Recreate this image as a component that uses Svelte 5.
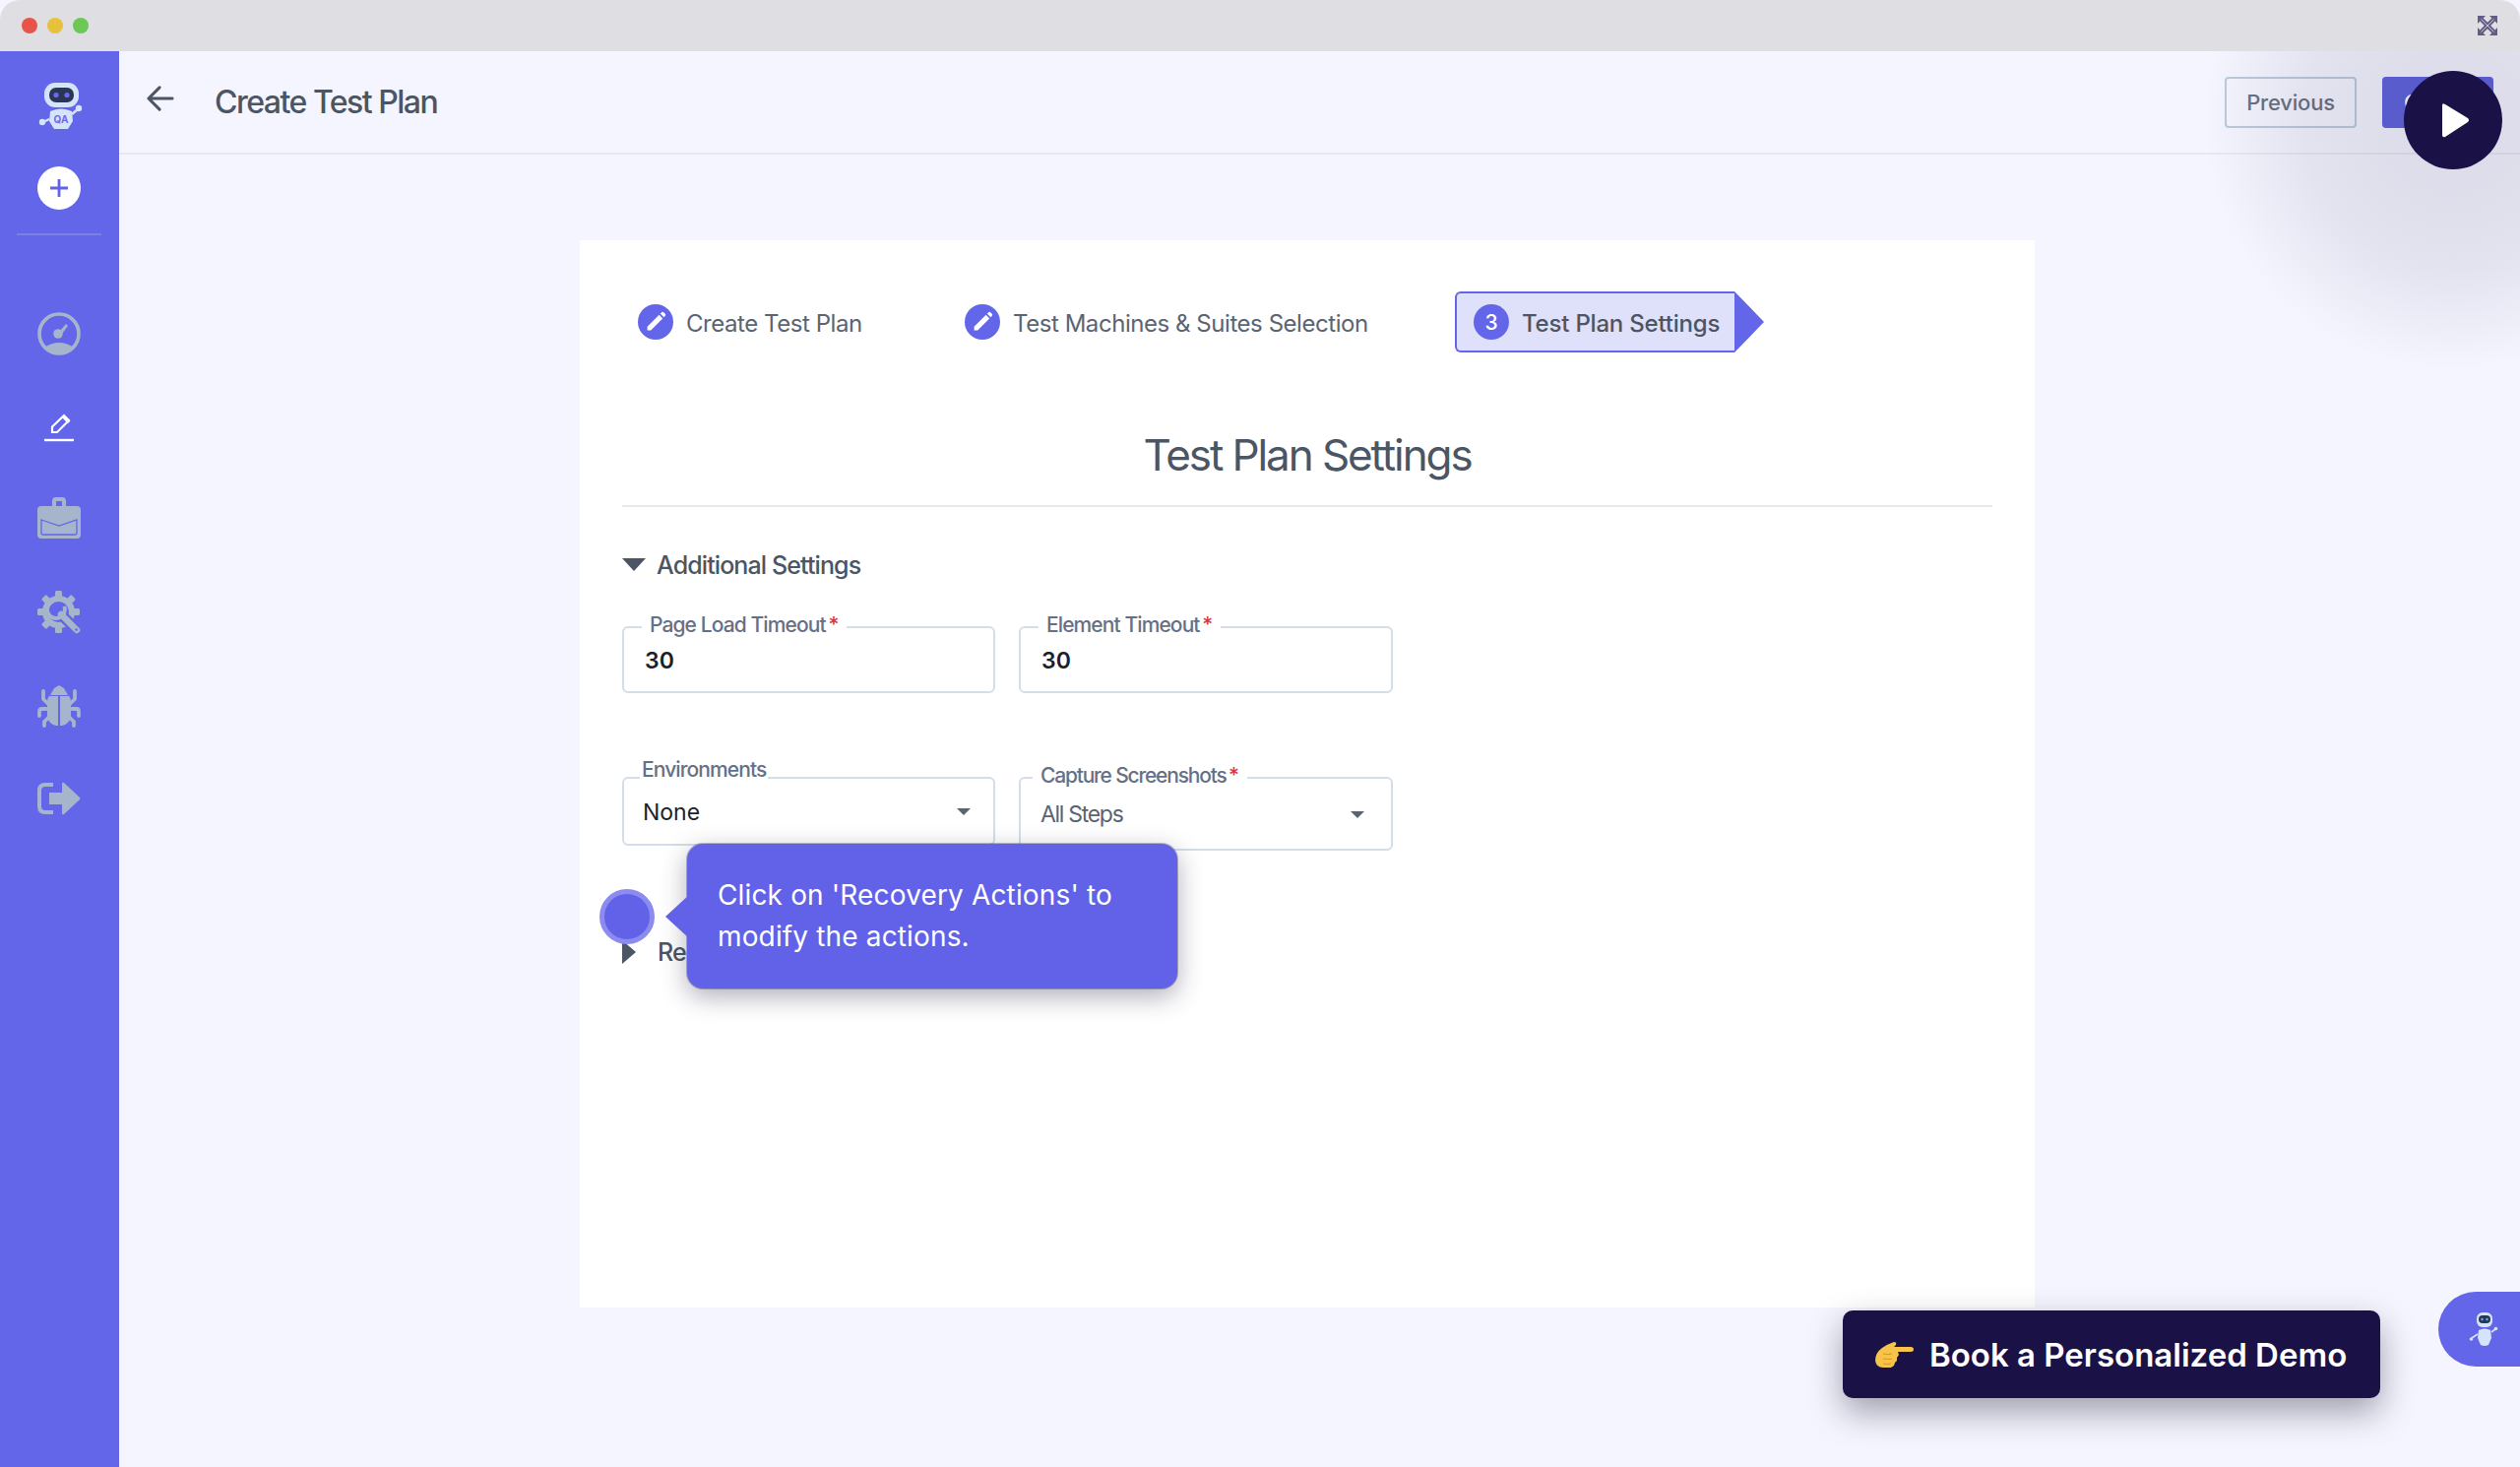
<script>
  const steps = [
    { label: 'Create Test Plan', cls: 's1' },
    { label: 'Test Machines & Suites Selection', cls: 's2' }
  ];
  const teeth = [0, 45, 90, 135, 180, 225, 270, 315];
</script>

<div class="window">
  <div class="titlebar">
    <div class="dots"><i class="red"></i><i class="yellow"></i><i class="green"></i></div>
    <svg class="expand" viewBox="0 0 20 20" width="20" height="20" fill="#635d85">
      <path d="M0 0h8L5.600 2.400 10 6.800l4.400-4.400L12 0h8v8l-2.400-2.400L13.200 10l4.400 4.400L20 12v8h-8l2.400-2.400L10 13.200l-4.400 4.400L8 20H0v-8l2.400 2.400L6.800 10 2.400 5.600 0 8z"/>
      <path d="M3.500 3.500l13 13M16.500 3.500l-13 13" stroke="#dfdee2" stroke-width=".8"/>
    </svg>
  </div>
  <div class="body">
    <aside class="sidebar">
      <div class="logo">
        <svg viewBox="0 0 46 48" width="46" height="48">
          <rect x="6" y="0" width="35" height="25" rx="11" fill="#d5e3fb"/>
          <rect x="11" y="5" width="25" height="15" rx="7" fill="#2b3656"/>
          <circle cx="18" cy="12.500" r="2.600" fill="#6b6bea"/>
          <circle cx="29" cy="12.500" r="2.600" fill="#6b6bea"/>
          <path d="M12 29q11-5 22 0l1 10-5 8H16l-5-8z" fill="#d5e3fb"/>
          <path d="M11 37l-6 3M34 32l6-5" stroke="#d5e3fb" stroke-width="2.500"/>
          <circle cx="4" cy="40" r="3.200" fill="#d5e3fb"/>
          <circle cx="41" cy="26" r="3.200" fill="#d5e3fb"/>
          <text x="23" y="41" text-anchor="middle" class="qa">QA</text>
        </svg>
      </div>
      <div class="plus">
        <svg viewBox="0 0 20 20" width="20" height="20"><path d="M10 1v18M1 10h18" stroke="#6262e9" stroke-width="2.800"/></svg>
      </div>
      <div class="rule"></div>
      <nav class="nav">
        <div class="item">
          <svg viewBox="0 0 44 44" width="44" height="44" fill="#a6b4cc">
            <circle cx="22" cy="22" r="20" fill="none" stroke="#a6b4cc" stroke-width="3.600"/>
            <path d="M7 36q15-10 30 0q-15 11-30 0z"/>
            <circle cx="21" cy="22" r="4.800"/>
            <path d="M22 20l7-8 2 2-6 8z"/>
          </svg>
        </div>
        <div class="item">
          <svg viewBox="0 0 30 30" width="30" height="30" fill="none" stroke="#fff" stroke-width="2">
            <path d="M8 14.500 20 3l5 5-12 12H8z" stroke-width="2.200"/>
            <path d="M19 4l6 6" stroke-width="3"/>
            <path d="M0 28h30" stroke-width="2.400"/>
          </svg>
        </div>
        <div class="item case">
          <svg viewBox="0 0 44 44" width="44" height="44" fill="#a6b4cc">
            <path d="M15 10V5q0-4 4-4h6q4 0 4 4v5h-4V5h-6v5z"/>
            <rect x="0" y="10" width="44" height="33" rx="4"/>
            <path d="M4 24l18 6 18-6v13q0 2-2 2H6q-2 0-2-2z" fill="none" stroke="#6366e9" stroke-width="1.300"/>
          </svg>
        </div>
        <div class="item">
          <svg viewBox="0 0 44 44" width="44" height="44">
            {#each teeth as t}
              <rect x="18" y="0" width="7" height="10" rx="1.500" fill="#a6b4cc" transform="rotate({t} 21.500 21.500)"/>
            {/each}
            <circle cx="21.500" cy="21.500" r="13.500" fill="none" stroke="#a6b4cc" stroke-width="6"/>
            <path d="M24 24 40 40" stroke="#6366e9" stroke-width="11" stroke-linecap="round"/>
            <circle cx="19" cy="19" r="9" fill="none" stroke="#a6b4cc" stroke-width="4" stroke-dasharray="42 15" transform="rotate(-20 19 19)"/>
            <path d="M24 24 40 40" stroke="#a6b4cc" stroke-width="6.500" stroke-linecap="round"/>
            <circle cx="39.500" cy="39.500" r="1.300" fill="#6366e9"/>
          </svg>
        </div>
        <div class="item">
          <svg viewBox="0 0 44 44" width="44" height="44" fill="#a6b4cc">
            <path d="M22 1l5 3 4 7H13l4-7z"/>
            <path d="M12 12h9v30h-2q-9-2-9-11v-14q0-3 2-5zM23 12h9q2 2 2 5v14q0 9-9 11h-2z"/>
            <path d="M11 20 6 15 6 7M33 20l5-5V7M9 25H4q-2 0-2 3v4M35 25h5q2 0 2 3v4M11 34l-4 4v4M33 34l4 4v4" fill="none" stroke="#a6b4cc" stroke-width="3.800" stroke-linecap="round" stroke-linejoin="round"/>
          </svg>
        </div>
        <div class="item">
          <svg viewBox="0 0 44 34" width="44" height="34" fill="#a6b4cc">
            <path d="M16 3H8Q2 3 2 9v16q0 6 6 6h8" fill="none" stroke="#a6b4cc" stroke-width="4"/>
            <path d="M12 11h13V2q0-2 2-1l16 15q1 1 0 2L27 33q-2 1-2-1v-9H12z"/>
          </svg>
        </div>
      </nav>
    </aside>

    <main class="main">
      <header class="header">
        <svg class="back" viewBox="0 0 30 28" width="28" height="26" fill="none" stroke="#4b5563" stroke-width="3.200" stroke-linecap="round" stroke-linejoin="round">
          <path d="M28 14H3M14 2 2 14l12 12"/>
        </svg>
        <h1>Create Test Plan</h1>
        <div class="actions">
          <button class="prev">Previous</button>
          <button class="next">Create</button>
        </div>
      </header>

      <section class="card">
        <div class="stepper">
          {#each steps as s}
            <div class="step {s.cls}">
              <span class="badge">
                <svg viewBox="0 0 20 20" width="24" height="24" fill="#fff"><path d="M3 14 13 4l3 3L6 17H3zM14 3l1-1q1-1 2 0l1 1q1 1 0 2l-1 1z"/></svg>
              </span>
              <span>{s.label}</span>
            </div>
          {/each}
          <div class="step current">
            <span class="badge">3</span>
            <span>Test Plan Settings</span>
          </div>
        </div>

        <h2>Test Plan Settings</h2>

        <div class="section-head open"><i class="tri-down"></i>Additional Settings</div>

        <div class="row r1">
          <div class="field"><label style="--l:18px">Page Load Timeout <em>*</em></label><div class="val num">30</div></div>
          <div class="field"><label style="--l:18px">Element Timeout <em>*</em></label><div class="val num">30</div></div>
        </div>

        <div class="row r2">
          <div class="field sel"><label class="high" style="--l:12px">Environments</label><div class="val">None</div><i class="caret"></i></div>
          <div class="field sel tall"><label style="--l:12px">Capture Screenshots <em>*</em></label><div class="val soft">All Steps</div><i class="caret"></i></div>
        </div>

        <div class="section-head closed"><i class="tri-right"></i>Recovery Actions</div>
      </section>
    </main>
  </div>

  <div class="glow"></div>
  <div class="play">
    <svg viewBox="0 0 30 36" width="30" height="36"><path d="M2 3q0-3 3-1l23 14q2 2 0 4L5 35q-3 1-3-2z" fill="#fff"/></svg>
  </div>

  <div class="pulse"></div>
  <div class="tooltip">
    <i class="tip-arrow"></i>
    Click on 'Recovery Actions' to<br />modify the actions.
  </div>

  <div class="demo">
    <svg viewBox="0 0 40 28" width="40" height="28">
      <path d="M8 7q6-4 12-6 3 0 2 3l-2 2h17q3 0 3 2.500T37 11H24l1 3-2 3 0 3-2 2-1 3-3 2H9q-7 0-8-7 0-8 7-13z" fill="#f7c348"/>
      <path d="M9 13q5 1 9 0M9 18q5 1 9 0M9 23q4 1 8 0" stroke="#e09a22" stroke-width="1.200" fill="none"/>
    </svg>
    <span>Book a Personalized Demo</span>
  </div>

  <div class="chat">
    <svg viewBox="0 0 30 34" width="30" height="34">
      <rect x="8" y="0" width="16" height="15" rx="6" fill="#d5e3fb"/>
      <rect x="10" y="3" width="12" height="8" rx="4" fill="#2b3656"/>
      <circle cx="13.500" cy="7" r="1.200" fill="#45c5ee"/>
      <circle cx="18.500" cy="7" r="1.200" fill="#45c5ee"/>
      <path d="M10 18q6-3 12 0l1 8-3 7q-4 2-8 0l-3-7z" fill="#d5e3fb"/>
      <path d="M9 22l-6 4M23 20l4-3" stroke="#d5e3fb" stroke-width="1.600"/>
      <circle cx="2.500" cy="27" r="1.800" fill="#d5e3fb"/>
      <circle cx="27.500" cy="16.500" r="1.800" fill="#d5e3fb"/>
    </svg>
  </div>
</div>

<style>
  :global(body) { margin: 0; background: #f4f5fe; }
  .window {
    position: relative; width: 2560px; height: 1490px; overflow: hidden;
    font-family: Inter, "Liberation Sans", sans-serif; color: #4b5563;
    background: #f4f5fe; display: flex; flex-direction: column;
  }
  .titlebar {
    flex: 0 0 52px; background: #dfdee2; border-radius: 20px 20px 0 0;
    display: flex; align-items: center; justify-content: space-between;
    padding: 0 23px 0 22px;
  }
  .dots { display: flex; gap: 10px; }
  .dots i { width: 16px; height: 16px; border-radius: 50%; display: block; }
  .red { background: #e6544a; } .yellow { background: #e7c13c; } .green { background: #6bc855; }
  .expand { display: block; margin-top: -1px; }
  .body { flex: 1; display: flex; min-height: 0; }

  .sidebar { flex: 0 0 121px; box-sizing: border-box; padding-right: 1px; background: #6366e9; display: flex; flex-direction: column; align-items: center; }
  .logo { margin-top: 32px; margin-left: 4px; height: 48px; }
  .logo svg, .plus svg, .item svg { display: block; }
  .qa { font: 700 10px Inter, sans-serif; fill: #6b6bea; }
  .plus {
    width: 44px; height: 44px; border-radius: 50%; background: #fff; margin-top: 37px;
    display: flex; align-items: center; justify-content: center;
  }
  .rule { width: 86px; height: 2px; background: #7d80dc; margin-top: 24px; }
  .nav { margin-top: 53px; display: flex; flex-direction: column; }
  .item { height: 94.400px; display: flex; align-items: center; justify-content: center; }
  .case svg { margin-top: -3px; }

  .main { flex: 1; min-width: 0; }
  .header {
    box-sizing: border-box; height: 105px; border-bottom: 2px solid #e8e9f0;
    display: flex; align-items: center; padding: 0 27px 0 28px;
  }
  .back { margin-top: -7px; flex: none; }
  h1 { margin: 0 0 0 41px; font-size: 32px; font-weight: 500; color: #4b5563; letter-spacing: -1.500px; }
  .actions { margin-left: auto; display: flex; gap: 26px; }
  .actions button { height: 52px; border-radius: 4px; font: 500 22px Inter, sans-serif; padding: 0; letter-spacing: -.2px; }
  .prev { width: 134px; background: transparent; border: 2px solid #bccadb; color: #6b7280; }
  .next { width: 113px; background: #6064dc; border: 0; color: #fff; }

  .card {
    margin: 87px 0 0 468px; width: 1478px; height: 1084px; background: #fff;
    box-sizing: border-box; padding: 0 43px;
  }
  .stepper { height: 104px; padding-top: 52px; display: flex; align-items: flex-start; }
  .step { display: flex; align-items: center; font-size: 24px; color: #5b6472; height: 62px; gap: 13px; letter-spacing: -.45px; }
  .step > span:last-child { padding-top: 2px; }
  .s1 { margin-left: 16px; width: 332px; }
  .s2 { width: 499px; }
  .badge {
    width: 36px; height: 36px; border-radius: 50%; background: #6366e9; color: #fff; flex: none;
    display: flex; align-items: center; justify-content: center; font-size: 21px; font-weight: 500;
  }
  .current {
    position: relative; width: 284px; box-sizing: border-box; background: #dfe0fa; margin-left: -1px;
    border: 2px solid #6366e9; border-radius: 6px 0 0 6px; padding-left: 17px; gap: 13px; color: #4b5563; font-weight: 500;
    border-right: 0; letter-spacing: -.2px;
  }
  .current::after {
    content: ""; position: absolute; left: 100%; top: -2px;
    border-left: 30px solid #6366e9; border-top: 31px solid transparent; border-bottom: 31px solid transparent;
  }
  h2 {
    margin: 31px 0 0; padding-bottom: 20px; text-align: center; font-size: 44px; font-weight: 400; line-height: 62px;
    color: #4b5563; border-bottom: 2px solid #e8e9ef; letter-spacing: -2.100px;
  }
  .section-head { display: flex; align-items: center; font-size: 25px; font-weight: 500; color: #4b5563; height: 40px; letter-spacing: -.9px; }
  .open { margin-top: 39px; gap: 11px; }
  .tri-down { width: 0; height: 0; border-left: 12px solid transparent; border-right: 12px solid transparent; border-top: 13px solid #4b5563; margin-top: -1px; }
  .closed { margin-top: 83px; gap: 22px; }
  .tri-right { width: 0; height: 0; border-left: 14px solid #4b5563; border-top: 12px solid transparent; border-bottom: 12px solid transparent; }

  .row { display: grid; grid-template-columns: 379px 380px; column-gap: 24px; align-items: start; }
  .r1 { margin-top: 42px; }
  .r2 { margin-top: 85px; }
  .field { position: relative; height: 68px; box-sizing: border-box; border: 2px solid #d3deea; border-radius: 6px; display: flex; align-items: center; padding-left: 21px; }
  .sel { height: 70px; padding-left: 19px; }
  .tall { height: 75px; padding-left: 20px; }
  label {
    position: absolute; left: var(--l); top: -15px; background: #fff; padding: 0 8px; font-size: 21px; font-weight: 500;
    color: #667085; line-height: 24px; letter-spacing: -.9px; white-space: nowrap;
  }
  label em { color: #dc3545; font-style: normal; letter-spacing: 0; margin-left: -2px; }
  .high { top: -21px; left: 16px; padding: 0 2px; }
  .tall label { left: 12px; padding: 0 8px 0 8px; letter-spacing: -1.200px; }
  .val { font-size: 23px; color: #1a1f2b; font-weight: 500; padding-top: 2px; }
  .num { font-weight: 600; }
  .sel .val { font-weight: 400; }
  .soft { color: #5b6472; letter-spacing: -1.300px; padding-top: 0; }
  .caret { position: absolute; right: 23px; top: 50%; margin-top: -3px; border-left: 7px solid transparent; border-right: 7px solid transparent; border-top: 7px solid #5b6472; }
  .tall .caret { right: 27px; }

  .glow {
    position: absolute; left: 2212px; top: -158px; width: 560px; height: 560px; border-radius: 50%;
    background: radial-gradient(circle, rgba(26,17,71,.12) 0%, rgba(26,17,71,.08) 38%, rgba(26,17,71,0) 64%);
    clip-path: inset(210px 0 0 0);
  }
  .play {
    position: absolute; left: 2442px; top: 72px; width: 100px; height: 100px; border-radius: 50%; background: #1a1147;
    display: flex; align-items: center; justify-content: center; padding-left: 4px; box-sizing: border-box;
  }
  .pulse {
    position: absolute; left: 609px; top: 903px; width: 56px; height: 56px; box-sizing: border-box; border-radius: 50%;
    background: #6262e9; border: 5px solid #8b8bf0;
  }
  .tooltip {
    position: absolute; left: 698px; top: 857px; width: 498px; height: 147px; box-sizing: border-box; border-radius: 16px;
    background: #6262e9; color: #fff; padding: 31px 31px; font: 400 28px/42px Inter, sans-serif; letter-spacing: .15px;
    box-shadow: 0 8px 26px rgba(40,40,70,.38), 0 0 0 1px rgba(70,70,110,.35);
  }
  .tip-arrow { position: absolute; left: -22px; top: 50%; margin-top: -22px; border-right: 24px solid #6262e9; border-top: 22px solid transparent; border-bottom: 22px solid transparent; }
  .demo {
    position: absolute; left: 1872px; top: 1331px; width: 546px; height: 89px; box-sizing: border-box; border-radius: 10px; background: #1a1147;
    color: #fff; display: flex; align-items: center; padding: 0 0 0 32px; gap: 16px; font: 600 33px Inter, sans-serif; letter-spacing: 0;
    box-shadow: 0 14px 34px rgba(30,30,50,.4);
  }
  .demo svg { flex: none; }
  .chat {
    position: absolute; left: 2477px; top: 1312px; width: 83px; height: 76px; border-radius: 38px 0 0 38px; background: #6366e9;
    display: flex; align-items: center; justify-content: center; padding-left: 9px; box-sizing: border-box;
  }
</style>
